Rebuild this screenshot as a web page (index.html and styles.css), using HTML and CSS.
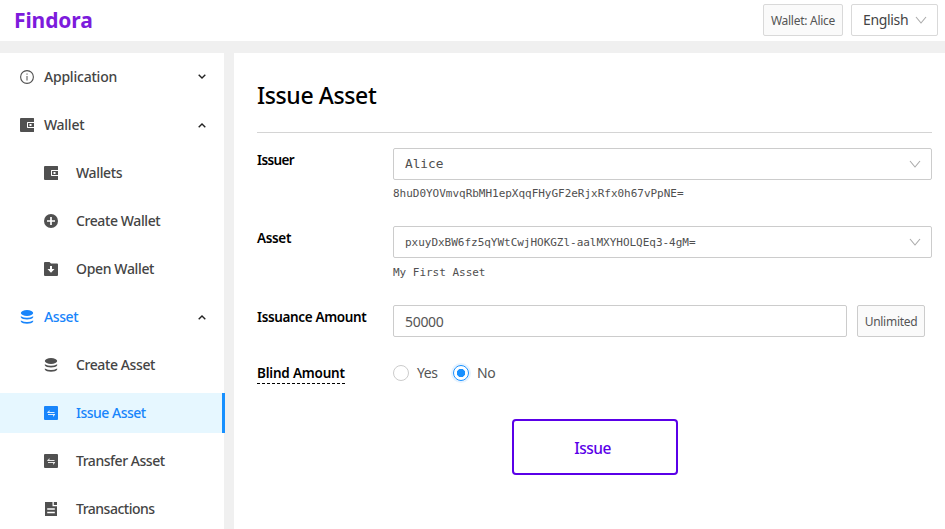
FILE: index.html
```html
<!DOCTYPE html>
<html lang="en">
<head>
<meta charset="utf-8">
<title>Findora</title>
<link rel="stylesheet" href="styles.css">
</head>
<body>
<svg class="defs" width="0" height="0">
  <symbol id="wallet" viewBox="0 0 14 14"><path fill="currentColor" d="M1 0h12.500a.5.5 0 0 1 .5.5V4H7.500L7 4.500v5l.5.5H14v3.500a.5.5 0 0 1-.5.500H1a1 1 0 0 1-1-1V1a1 1 0 0 1 1-1z"/><path fill="currentColor" fill-rule="evenodd" d="M8 5h6v4H8zM9.500 6v2h2V6z"/></symbol>
  <symbol id="database" viewBox="0 0 14 14"><g fill="currentColor"><ellipse cx="7" cy="3" rx="6.200" ry="2.900"/><path d="M.8 6.200Q7 9.500 13.200 6.200v1.100C12.200 10.200 1.800 10.200.8 7.300zM.8 10.400Q7 13.500 13.200 10.400v1.200C12 14.500 2 14.500.8 11.600z"/></g></symbol>
  <symbol id="transaction" viewBox="0 0 14 14"><rect width="14" height="14" rx="1" fill="currentColor"/><path fill="none" stroke="#fff" stroke-opacity=".85" stroke-width="1" d="M3.500 6.500h7M4 8.500h7"/><path fill="#fff" fill-opacity=".75" d="M3 6.500 5.500 4v2.500zM11.300 8.500 9 11V8.500z"/></symbol>
</svg>
<header class="topbar">
  <h1 class="brand">Findora</h1>
  <button class="btn wallet-btn"><span>Wallet: Alice</span></button>
  <div class="select lang"><span>English</span><svg class="caret" viewBox="0 0 12 8"><path d="M1 1l5 6 5-6"/></svg></div>
</header>
<div class="layout">
  <nav class="sidebar">
    <a class="item"><svg class="icon" viewBox="0 0 14 14"><circle cx="7" cy="7" r="6.400" fill="none" stroke="currentColor" stroke-width="1.100"/><path stroke="currentColor" d="M7 3.500v1.200M7 6v4.500"/></svg><span class="t-application">Application</span><svg class="arrow down" viewBox="0 0 8 5"><path d="M.7.7 4 4 7.300.7"/></svg></a>
    <a class="item"><svg class="icon" viewBox="0 0 14 14"><use href="#wallet" width="14" height="14"/></svg><span class="t-wallet">Wallet</span><svg class="arrow" viewBox="0 0 8 5"><path d="M.7 4.300 4 1l3.300 3.300"/></svg></a>
    <a class="item sub"><svg class="icon" viewBox="0 0 14 14"><use href="#wallet" width="14" height="14"/></svg><span class="t-wallets">Wallets</span></a>
    <a class="item sub"><svg class="icon" viewBox="0 0 14 14"><circle cx="7" cy="7" r="7" fill="currentColor"/><path stroke="#fff" stroke-width="1.700" d="M7 3v8M3 7h8"/></svg><span class="t-create-wallet">Create Wallet</span></a>
    <a class="item sub"><svg class="icon" viewBox="0 0 14 14"><path fill="currentColor" d="M1 0h4.500L7 1.500h6a1 1 0 0 1 1 1V13a1 1 0 0 1-1 1H1a1 1 0 0 1-1-1V1a1 1 0 0 1 1-1z"/><path fill="#fff" d="M6 4h2v3h2.500L7 10.800 3.500 7H6z"/></svg><span class="t-open-wallet">Open Wallet</span></a>
    <a class="item open"><svg class="icon" viewBox="0 0 14 14"><use href="#database" width="14" height="14"/></svg><span class="t-asset">Asset</span><svg class="arrow" viewBox="0 0 8 5"><path d="M.7 4.300 4 1l3.300 3.300"/></svg></a>
    <a class="item sub"><svg class="icon" viewBox="0 0 14 14"><use href="#database" width="14" height="14"/></svg><span class="t-create-asset">Create Asset</span></a>
    <a class="item sub active"><svg class="icon" viewBox="0 0 14 14"><use href="#transaction" width="14" height="14"/></svg><span class="t-issue-asset">Issue Asset</span></a>
    <a class="item sub"><svg class="icon" viewBox="0 0 14 14"><use href="#transaction" width="14" height="14"/></svg><span class="t-transfer">Transfer Asset</span></a>
    <a class="item sub"><svg class="icon" viewBox="0 0 14 14"><path fill="currentColor" d="M1 0h7.500v4.200H13V14H1zM9.800 0H13v2.900H9.800z"/><path stroke="#fff" stroke-width="1.300" d="M3.200 7h7.600M3.200 10.500h7.600"/></svg><span class="t-transactions">Transactions</span></a>
  </nav>
  <main class="content">
    <h2 class="title"><span>Issue Asset</span></h2>
    <div class="row issuer">
      <label><span class="l-issuer">Issuer</span></label>
      <div class="field"><div class="select"><span class="mono name">Alice</span><svg class="caret" viewBox="0 0 12 8"><path d="M1 1l5 6 5-6"/></svg></div><div class="mono hint">8huD0YOVmvqRbMH1epXqqFHyGF2eRjxRfx0h67vPpNE=</div></div>
    </div>
    <div class="row asset">
      <label><span class="l-asset">Asset</span></label>
      <div class="field"><div class="select"><span class="mono">pxuyDxBW6fz5qYWtCwjHOKGZl-aalMXYHOLQEq3-4gM=</span><svg class="caret" viewBox="0 0 12 8"><path d="M1 1l5 6 5-6"/></svg></div><div class="mono hint">My First Asset</div></div>
    </div>
    <div class="row amount">
      <label><span class="l-amount">Issuance Amount</span></label>
      <div class="field inline"><div class="input"><span>50000</span></div><button class="btn unlimited"><span>Unlimited</span></button></div>
    </div>
    <div class="row blind">
      <label><span class="l-blind">Blind Amount</span></label>
      <div class="field radios"><i class="radio"></i><span class="yes">Yes</span><i class="radio checked"></i><span class="no">No</span></div>
    </div>
    <button class="issue"><span>Issue</span></button>
  </main>
</div>
</body>
</html>
```
FILE: styles.css
```css
* { box-sizing: border-box; }
body { margin: 0; height: 529px; overflow: hidden; background: #f0f0f0; font: 14px/20px "Noto Sans", sans-serif; color: #555; }
.defs { position: absolute; }
h1, h2 { margin: 0; }
button { font: inherit; padding: 0; color: inherit; }
span { white-space: nowrap; }

.topbar { display: flex; height: 41px; padding: 4px 7px 0 14px; background: #fff; }
.brand { flex: 1; font-size: 21px; line-height: 33px; font-weight: 700; color: #7d1bdc; letter-spacing: -.1px; }
.btn { display: flex; align-items: center; justify-content: center; height: 32px; border: 1px solid #d9d9d9; border-radius: 2px; background: #fafafa; font-size: 12px; letter-spacing: -.27px; }
.btn span { padding-top: 1px; }
.wallet-btn { width: 80px; margin-right: 8px; }
.select, .input { display: flex; align-items: center; height: 32px; border: 1px solid #ccc; border-radius: 2px; background: #fff; padding: 0 10px 0 11px; }
.lang { width: 87px; justify-content: space-between; border-color: #d9d9d9; color: #444; letter-spacing: -.35px; }
.caret { width: 12px; height: 8px; fill: none; stroke: #aaa; stroke-width: 1.1; flex: none; }

.layout { display: flex; height: 476px; margin-top: 12px; }
.sidebar { width: 224px; padding-top: 4px; background: #fff; flex: none; }
.item { display: flex; align-items: center; height: 40px; margin-bottom: 8px; padding: 0 18px 0 20px; color: #444; font-weight: 500; letter-spacing: -.4px; }
.icon { width: 14px; height: 14px; margin-right: 10px; color: #505050; flex: none; }
.sub { padding-left: 44px; }
.sub .icon { margin-right: 18px; }
.arrow { width: 8px; height: 5px; margin-left: auto; fill: none; stroke: #222; stroke-width: 1.4; }
.down { margin-bottom: 2px; }
.t-application { letter-spacing: -.22px; }
.t-wallet { letter-spacing: -.27px; }
.t-open-wallet, .t-wallets { letter-spacing: -.35px; }
.t-issue-asset, .t-transactions { letter-spacing: -.5px; }
.t-transfer { letter-spacing: -.47px; }
.open, .open .icon, .active, .active .icon { color: #1885fb; }
.active { background: #e6f7ff; border-right: 3px solid #1890ff; margin-right: -1px; }

.content { flex: 1; margin-left: 10px; padding: 25px 13px 0 23px; background: #fff; }
.title { height: 55px; border-bottom: 1px solid #d4d4d4; font-size: 23px; line-height: 35px; font-weight: 500; color: #000; letter-spacing: -.38px; }
.row { display: flex; }
.row label { width: 136px; padding-top: 2px; color: #000; font-size: 13.5px; font-weight: 600; letter-spacing: -.35px; }
.field { flex: 1; }
.issuer { margin-top: 15px; height: 78px; }
.asset { height: 79px; }
.amount { height: 58px; }
.field .select { justify-content: space-between; }
.mono { font-family: "DejaVu Sans Mono", monospace; font-size: 11px; color: #505050; letter-spacing: -.02px; }
.name { font-size: 12.8px; }
.hint { line-height: 16px; margin-top: 6px; }
.asset .mono { padding-top: 1px; }
.inline { display: flex; }
.input { width: 454px; padding-top: 1px; letter-spacing: -.3px; }
.unlimited { width: 68px; margin-left: 10px; border-color: #ccc; }
.l-issuer { letter-spacing: -.6px; }
.l-blind { display: inline-block; border-bottom: 1px dashed #000; height: 21px; letter-spacing: -.2px; }
.radios { display: flex; align-items: center; height: 20px; }
.radio { width: 16px; height: 16px; border: 1px solid #ccc; border-radius: 50%; margin-right: 8px; }
.yes { width: 36px; letter-spacing: -.4px; }
.no { letter-spacing: -.3px; }
.checked { border-color: #1890ff; background: radial-gradient(circle, #1890ff 0 3.800px, #fff 4.500px); box-shadow: 0 0 0 2px #e6f3ff; }
.issue { display: block; width: 166px; height: 56px; margin: 35px 0 0 255px; padding: 1px 5px 0 0; border: 2px solid #5a00e8; border-radius: 4px; background: #fff; color: #5a00e8; font-size: 15.5px; font-weight: 500; letter-spacing: -.5px; }
.blind label { padding-top: 0; }
```
